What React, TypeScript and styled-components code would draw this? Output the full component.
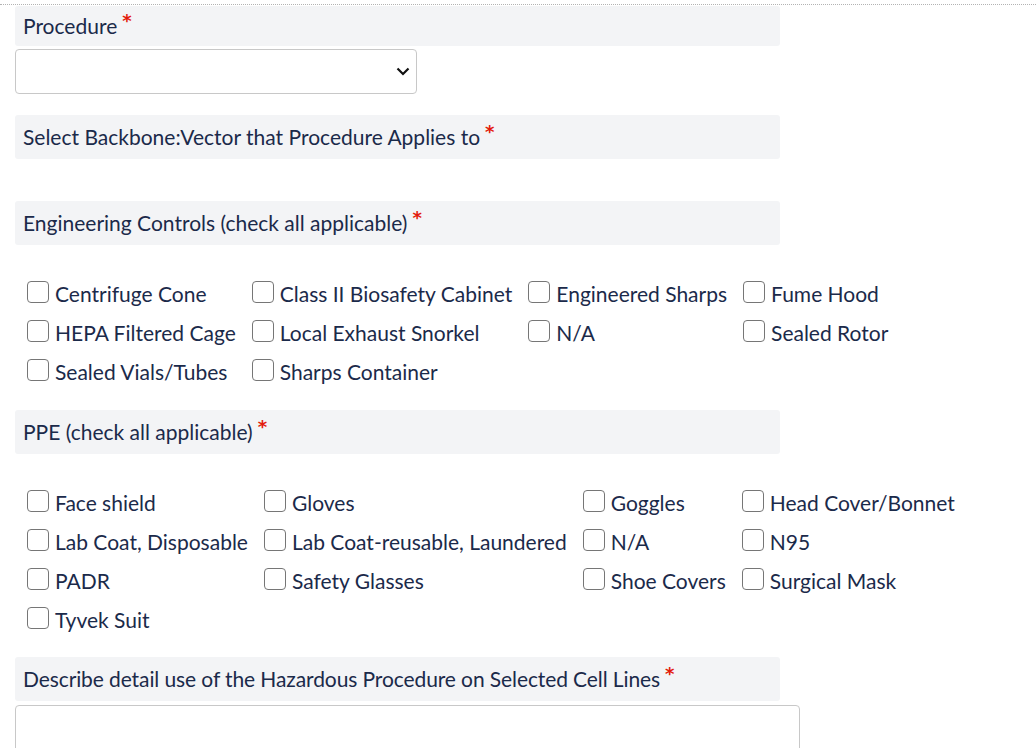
import React from "react";
import styled, { createGlobalStyle } from "styled-components";

const Global = createGlobalStyle`
  html, body { margin: 0; padding: 0; background: #fff; }
  body { font-family: Lato, "Open Sans", sans-serif; color: #1b2a4a; }
`;

const Page = styled.div`
  margin-top: 4px;
  border-top: 1px dotted #b3b3b3;
  padding: 1px 15px 0 15px;
  display: flex;
  flex-direction: column;
`;

const LabelBar = styled.div<{ $h?: number; $mt?: number; $tight?: boolean }>`
  width: 765px;
  box-sizing: border-box;
  height: ${(p) => p.$h ?? 44}px;
  margin-top: ${(p) => p.$mt ?? 0}px;
  background: #f3f4f6;
  border-radius: 3px;
  padding: 0 8px 2px 8px;
  display: flex;
  align-items: center;
  font-size: 21px;
  color: #1b2a4a;
  letter-spacing: ${(p) => (p.$tight ? "-0.1px" : "normal")};
`;

const Req = styled.span`
  color: #e31b0c;
  font-family: "DejaVu Sans", sans-serif;
  font-weight: 700;
  font-size: 18px;
  position: relative;
  top: -5px;
  margin-left: 5px;
`;

const SelectBox = styled.div`
  margin-top: 3px;
  width: 402px;
  height: 45px;
  box-sizing: border-box;
  border: 1px solid #c8c8c8;
  border-radius: 4px;
  display: flex;
  align-items: center;
  justify-content: flex-end;
  padding-right: 6px;
`;

const Grid = styled.div<{ $mt: number }>`
  margin-top: ${(p) => p.$mt}px;
  padding-left: 12px;
  display: grid;
  grid-template-columns: repeat(4, max-content);
  column-gap: 16px;
  grid-auto-rows: 39px;
`;

const Item = styled.label`
  display: flex;
  align-items: center;
  font-size: 21px;
  color: #1b2a4a;
  white-space: nowrap;
`;

const Box = styled.input`
  appearance: none;
  -webkit-appearance: none;
  margin: 0 6px 0 0;
  width: 22px;
  height: 22px;
  box-sizing: border-box;
  border: 1.5px solid #767676;
  border-radius: 4px;
  background: #fff;
  position: relative;
  top: -2px;
`;

const TextArea = styled.div`
  margin-top: 4px;
  width: 785px;
  height: 80px;
  box-sizing: border-box;
  border: 1px solid #c8c8c8;
  border-radius: 4px;
`;

const Check = ({ label }: { label: string }) => (
  <Item>
    <Box type="checkbox" />
    {label}
  </Item>
);

const eng = [
  "Centrifuge Cone",
  "Class II Biosafety Cabinet",
  "Engineered Sharps",
  "Fume Hood",
  "HEPA Filtered Cage",
  "Local Exhaust Snorkel",
  "N/A",
  "Sealed Rotor",
  "Sealed Vials/Tubes",
  "Sharps Container",
];

const ppe = [
  "Face shield",
  "Gloves",
  "Goggles",
  "Head Cover/Bonnet",
  "Lab Coat, Disposable",
  "Lab Coat-reusable, Laundered",
  "N/A",
  "N95",
  "PADR",
  "Safety Glasses",
  "Shoe Covers",
  "Surgical Mask",
  "Tyvek Suit",
];

export default function App() {
  return (
    <>
      <Global />
      <Page>
        <LabelBar $h={40}>
          Procedure<Req>*</Req>
        </LabelBar>
        <SelectBox>
          <svg width="14" height="9" viewBox="0 0 14 9">
            <path d="M1.5 1.5 L7 7 L12.5 1.5" fill="none" stroke="#111" strokeWidth="2.2" />
          </svg>
        </SelectBox>
        <LabelBar $mt={21}>
          Select Backbone:Vector that Procedure Applies to<Req>*</Req>
        </LabelBar>
        <LabelBar $mt={42}>
          Engineering Controls (check all applicable)<Req>*</Req>
        </LabelBar>
        <Grid $mt={29}>
          {eng.map((l, i) => (
            <Check key={i} label={l} />
          ))}
        </Grid>
        <LabelBar $mt={19}>
          PPE (check all applicable)<Req>*</Req>
        </LabelBar>
        <Grid $mt={29}>
          {ppe.map((l, i) => (
            <Check key={i} label={l} />
          ))}
        </Grid>
        <LabelBar $mt={18} $tight>
          Describe detail use of the Hazardous Procedure on Selected Cell Lines<Req>*</Req>
        </LabelBar>
        <TextArea />
      </Page>
    </>
  );
}
